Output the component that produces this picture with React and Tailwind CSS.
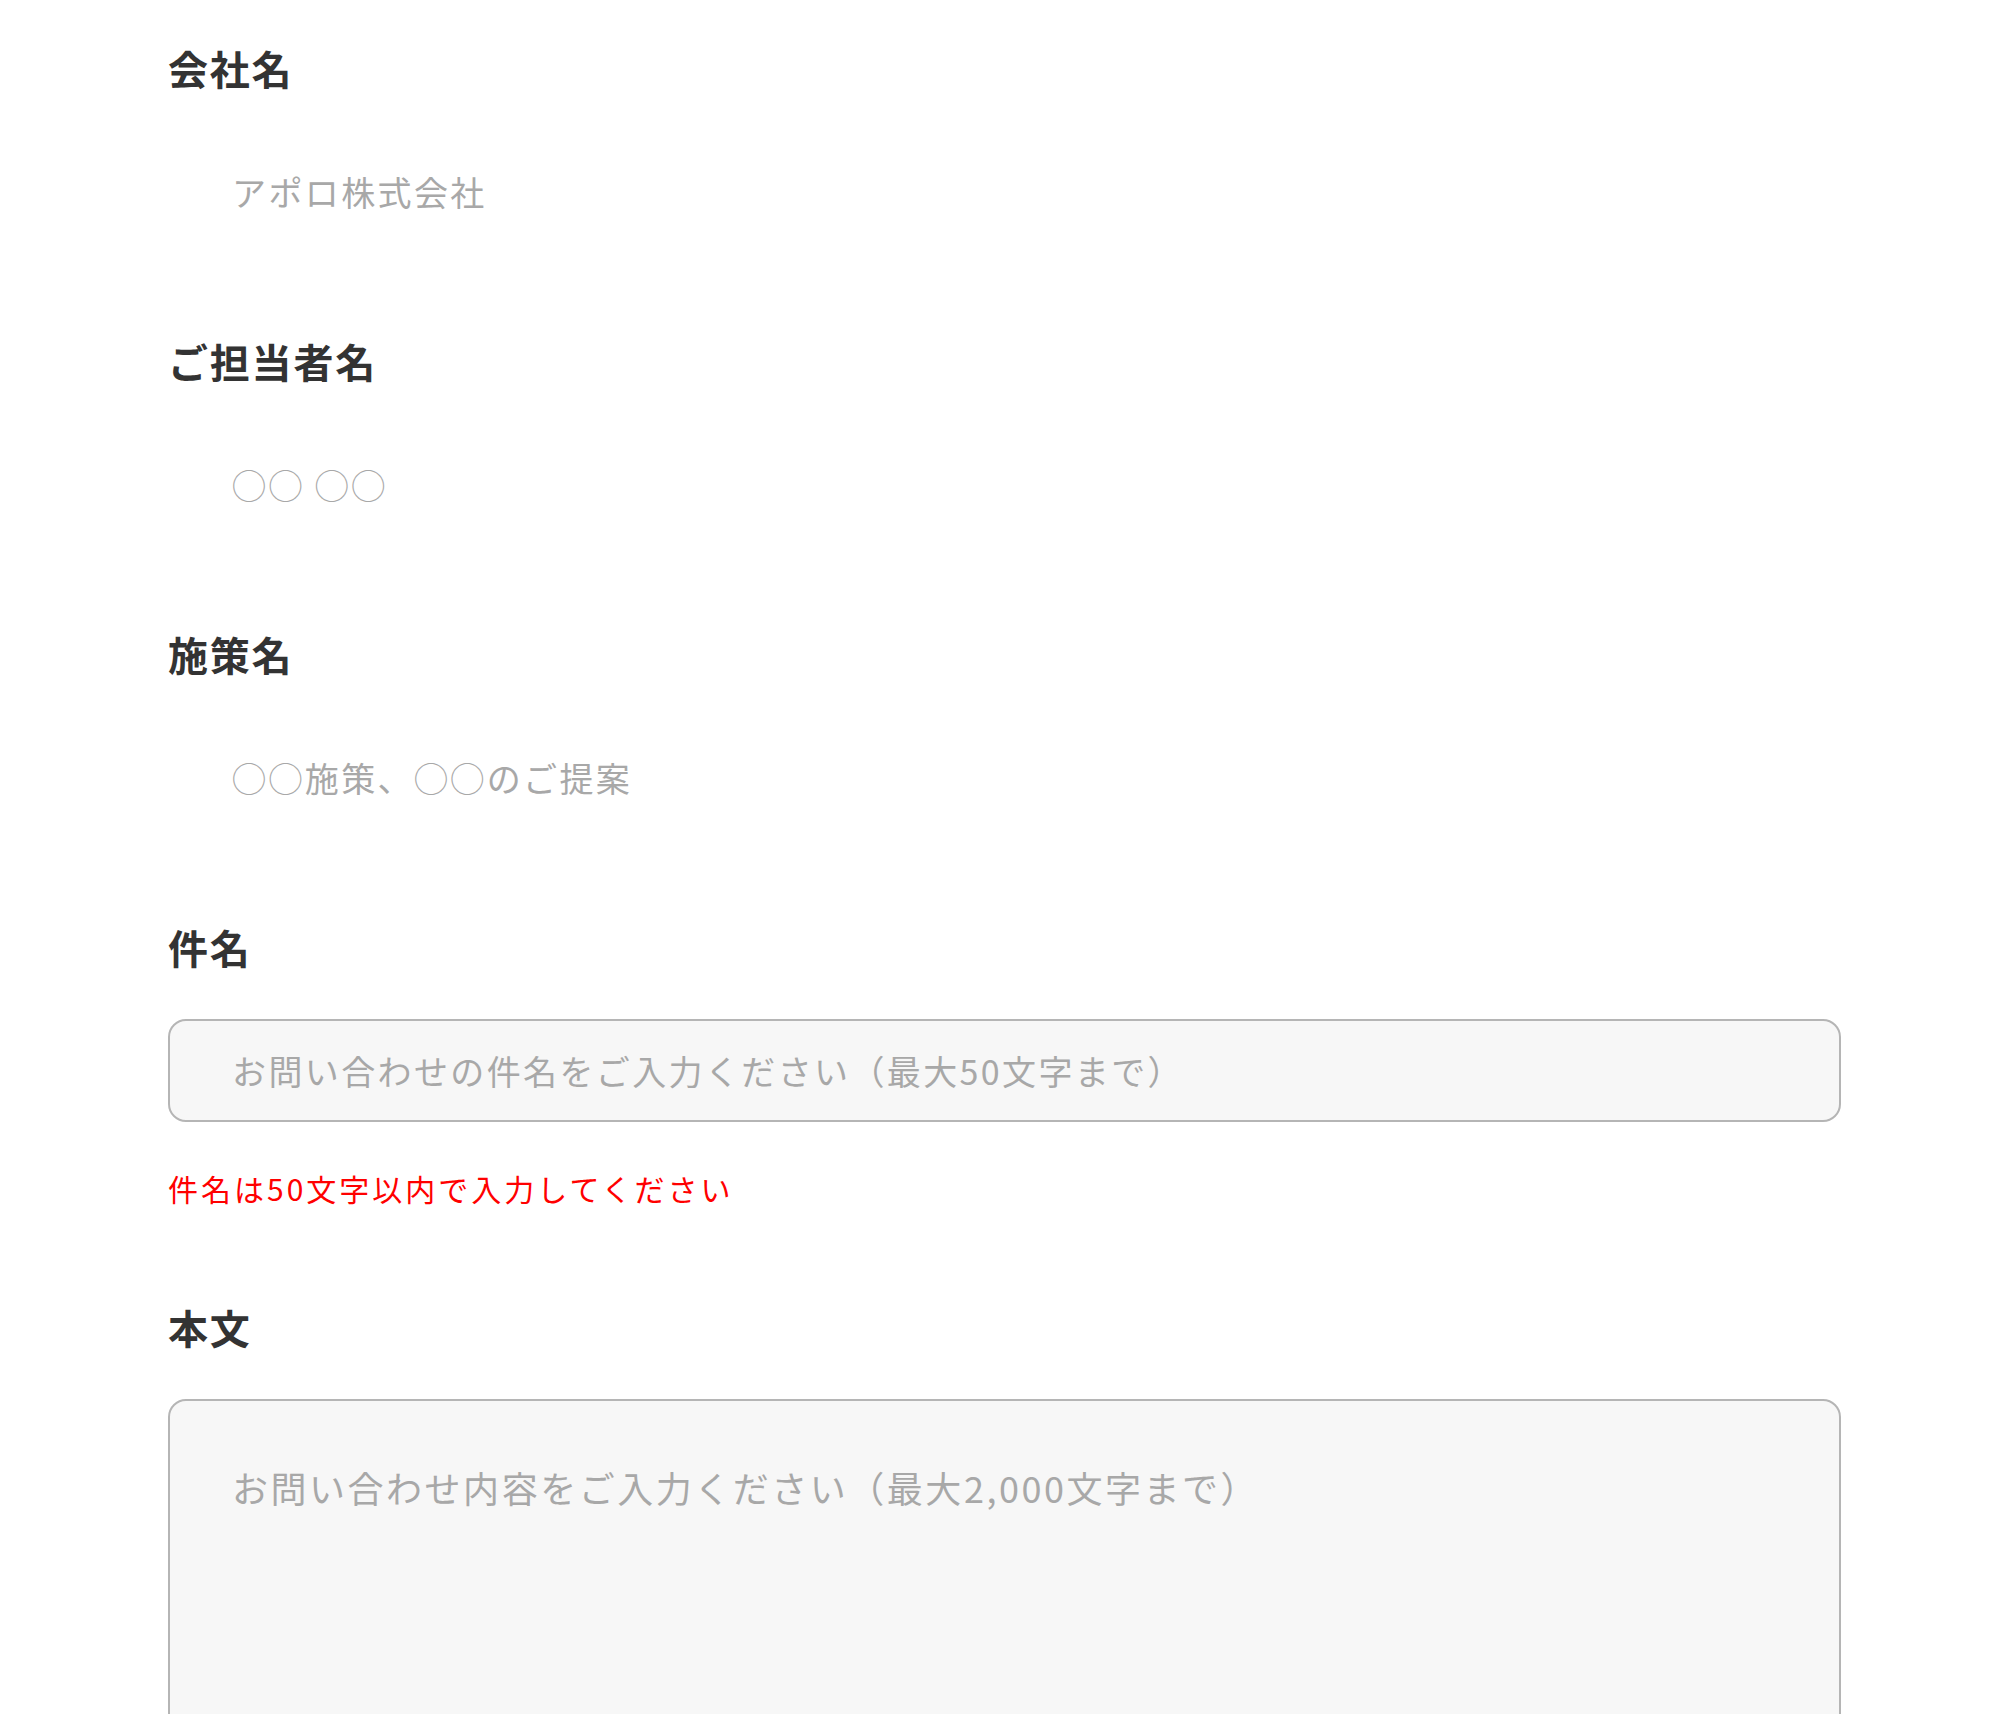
import React from "react";

// Noto Sans CJK JP for everything on this form
const jp = {
  fontFamily: "'Noto Sans CJK JP', 'Noto Sans', sans-serif",
};

function Label({ children }) {
  return (
    <p className="text-[40px] leading-[60px] font-bold text-[#333333] tracking-[0.045em] mb-[42px]">
      {children}
    </p>
  );
}

function Field({ label, placeholder, boxed = false, error, className = "" }) {
  return (
    <div className={className}>
      <Label>{label}</Label>
      <input
        type="text"
        placeholder={placeholder}
        className={`
          block w-full h-[103px]
          rounded-[18px] border-2
          px-[62px]
          text-[34px] tracking-[0.07em] text-[#333333]
          placeholder:text-[#a8a8a8]
          outline-none
          ${boxed ? "bg-[#f7f7f7] border-[#b5b5b5]" : "bg-white border-transparent"}
        `}
        style={jp}
      />
      {error && (
        <p className="mt-[44px] text-[30px] leading-[45px] text-[#ff0000] tracking-[0.1em]">
          {error}
        </p>
      )}
    </div>
  );
}

export default function App() {
  return (
    <div className="w-full min-h-[1714px] bg-white" style={jp}>
      <form className="pl-[168px] pr-[159px] pt-[38px] flex flex-col gap-[88px]">
        {/* ===== readonly-looking fields ===== */}
        <Field label="会社名" placeholder="アポロ株式会社" />
        <Field label="ご担当者名" placeholder="◯◯ ◯◯" />
        <Field label="施策名" placeholder="◯◯施策、◯◯のご提案" />

        {/* ===== subject ===== */}
        <Field
          boxed
          label="件名"
          placeholder="お問い合わせの件名をご入力ください（最大50文字まで）"
          error="件名は50文字以内で入力してください"
        />

        {/* ===== body ===== */}
        <div className="-mt-[2px]">
          <Label>本文</Label>
          <textarea
            placeholder="お問い合わせ内容をご入力ください（最大2,000文字まで）"
            className="
              block w-full h-[420px] resize-none
              rounded-[18px] border-2 border-[#b5b5b5] bg-[#f7f7f7]
              px-[62px] pt-[61px] pb-[62px]
              text-[36px] leading-[50px] tracking-[0.07em] text-[#333333]
              placeholder:text-[#a8a8a8]
              outline-none
            "
            style={jp}
          />
        </div>
      </form>
    </div>
  );
}
